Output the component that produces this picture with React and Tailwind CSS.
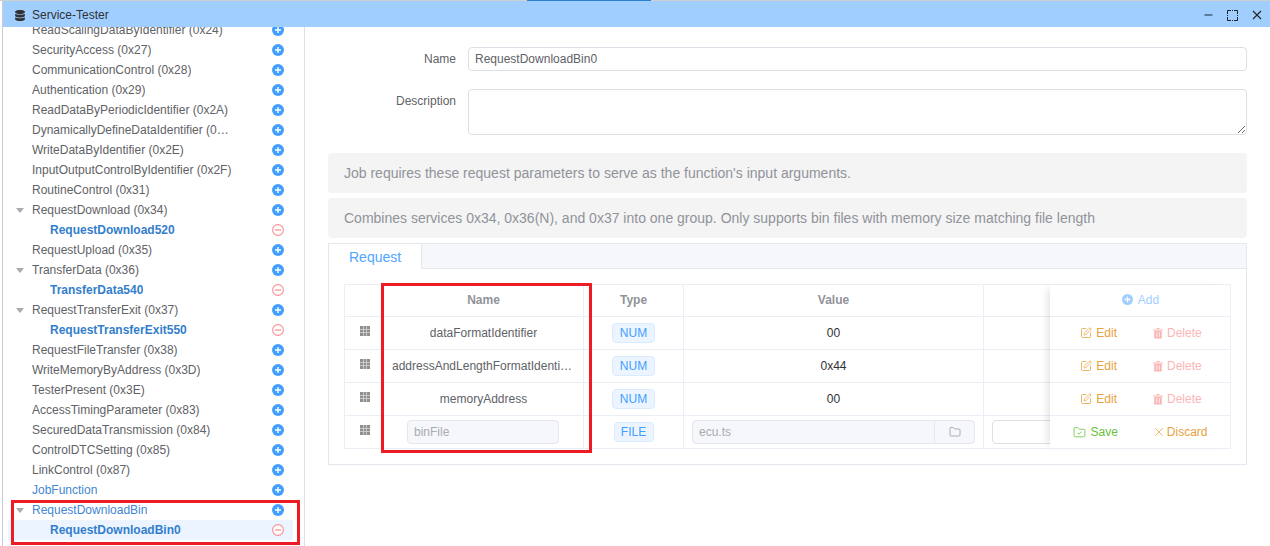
import { Folder, FolderCheck, SquarePen, X } from 'lucide-react';
import { FaDatabase } from 'react-icons/fa';

const services = [
	{ label: 'ReadScalingDataByIdentifier (0x24)' },
	{ label: 'SecurityAccess (0x27)' },
	{ label: 'CommunicationControl (0x28)' },
	{ label: 'Authentication (0x29)' },
	{ label: 'ReadDataByPeriodicIdentifier (0x2A)' },
	{ label: 'DynamicallyDefineDataIdentifier (0x2C)' },
	{ label: 'WriteDataByIdentifier (0x2E)' },
	{ label: 'InputOutputControlByIdentifier (0x2F)' },
	{ label: 'RoutineControl (0x31)' },
	{ label: 'RequestDownload (0x34)', open: true },
	{ label: 'RequestDownload520', child: true },
	{ label: 'RequestUpload (0x35)' },
	{ label: 'TransferData (0x36)', open: true },
	{ label: 'TransferData540', child: true },
	{ label: 'RequestTransferExit (0x37)', open: true },
	{ label: 'RequestTransferExit550', child: true },
	{ label: 'RequestFileTransfer (0x38)' },
	{ label: 'WriteMemoryByAddress (0x3D)' },
	{ label: 'TesterPresent (0x3E)' },
	{ label: 'AccessTimingParameter (0x83)' },
	{ label: 'SecuredDataTransmission (0x84)' },
	{ label: 'ControlDTCSetting (0x85)' },
	{ label: 'LinkControl (0x87)' },
	{ label: 'JobFunction', job: true },
	{ label: 'RequestDownloadBin', open: true, job: true },
	{ label: 'RequestDownloadBin0', child: true, selected: true },
];

const params = [
	{ name: 'dataFormatIdentifier', value: '00' },
	{ name: 'addressAndLengthFormatIdentifier', value: '0x44' },
	{ name: 'memoryAddress', value: '00' },
];

const PlusCircle = ({ className = 'w-3 h-3 text-[#409eff]' }) => (
	<svg viewBox="0 0 12 12" className={className} aria-hidden="true">
		<circle cx="6" cy="6" r="6" fill="currentColor" />
		<path d="M6 3v6M3 6h6" stroke="#fff" strokeWidth="1.4" />
	</svg>
);

const MinusCircle = () => (
	<svg viewBox="0 0 12 12" className="w-3 h-3" aria-hidden="true">
		<circle cx="6" cy="6" r="5.4" fill="#fff" stroke="#f56c6c" strokeOpacity="0.75" strokeWidth="1.1" />
		<path d="M3 6h6" stroke="#f56c6c" strokeOpacity="0.8" strokeWidth="1.2" />
	</svg>
);

const DragGrid = () => (
	<svg viewBox="0 0 10 10" className="w-2.5 h-2.5 -mt-1" aria-hidden="true">
		<rect width="10" height="10" fill="#8f8f8f" />
		<path d="M3.5 0v10M6.5 0v10M0 3.5h10M0 6.5h10" stroke="#d6d6d6" strokeWidth="0.8" />
	</svg>
);

const TrashIcon = () => (
	<svg viewBox="0 0 12 12" className="w-3 h-3" aria-hidden="true">
		<path d="M1 2.5h10v1H1zM4.5 1h3v1h-3z" fill="#fab6b6" />
		<path d="M2.2 4h7.6v7.5H2.2z" fill="#fab6b6" />
		<path d="M4.7 5.3v4.6M7.3 5.3v4.6" stroke="#fff" strokeWidth="0.8" />
	</svg>
);

const TreeRow = ({ item }) => (
	<div
		className={`flex items-center h-5 pr-[9px] ${item.selected ? 'bg-[#ecf5ff]' : ''} ${item.child ? 'pl-[42px]' : 'pl-0'}`}
	>
		{!item.child && (
			<span className="w-6 shrink-0 flex justify-center">
				{item.open && (
					<span className="w-0 h-0 border-x-[4px] border-x-transparent border-t-[5px] border-t-[#a8abb2]" />
				)}
			</span>
		)}
		<span
			className={`truncate flex-none ${item.child ? 'font-bold text-[#337ecc]' : item.job ? 'text-[#3f86d3] max-w-[200px]' : 'text-[#606266] max-w-[200px]'}`}
		>
			{item.label}
		</span>
		<span className="ml-auto">{item.child ? <MinusCircle /> : <PlusCircle />}</span>
	</div>
);

const Tag = ({ children, wide }) => (
	<span
		className={`flex items-center justify-center h-5 rounded bg-[#ecf5ff] border border-[#d9ecff] text-[#409eff] ${wide ? 'w-[40px]' : 'w-[43px]'}`}
	>
		{children}
	</span>
);

const EditDelete = () => (
	<div className="flex items-center justify-center gap-[35px] h-full pl-[2px]">
		<span className="flex items-center gap-[4px] text-[#e6a23c]">
			<SquarePen className="w-3 h-3 text-[#e6a23c]" strokeWidth={1.6} />
			Edit
		</span>
		<span className="flex items-center gap-[3px] text-[#fab6b6]">
			<TrashIcon />
			Delete
		</span>
	</div>
);

const ParamTable = () => (
	<div className="flex border-t border-l border-r border-[#ebeef5] text-[#606266]">
		{/* Scrolling columns */}
		<div className="w-[705px] overflow-hidden">
			<div className="flex h-8 pb-[2px] border-b border-[#ebeef5] w-[860px] font-bold text-[#909399]">
				<div className="w-[39px]" />
				<div className="w-[200px] -mb-[2px] border-r border-[#ebeef5] flex items-center justify-center pb-[2px]">Name</div>
				<div className="w-[100px] -mb-[2px] border-r border-[#ebeef5] flex items-center justify-center pb-[2px]">Type</div>
				<div className="w-[300px] -mb-[2px] border-r border-[#ebeef5] flex items-center justify-center pb-[2px]">Value</div>
			</div>
			{params.map((p) => (
				<div key={p.name} className="flex h-[33px] border-b border-[#ebeef5] w-[860px]">
					<div className="w-[39px] flex items-center justify-center">
						<DragGrid />
					</div>
					<div className="w-[200px] border-r border-[#ebeef5] flex items-center justify-center px-2">
						<span className="truncate">{p.name}</span>
					</div>
					<div className="w-[100px] border-r border-[#ebeef5] flex items-center justify-center">
						<Tag>NUM</Tag>
					</div>
					<div className="w-[300px] border-r border-[#ebeef5] flex items-center justify-center text-[#303133]">
						{p.value}
					</div>
				</div>
			))}
			<div className="flex h-[33px] border-b border-[#ebeef5] w-[860px]">
				<div className="w-[39px] flex items-center justify-center">
					<DragGrid />
				</div>
				<div className="w-[200px] border-r border-[#ebeef5] flex items-center pl-[23px]">
					<input
						readOnly
						value="binFile"
						className="w-[152px] h-6 px-[6px] rounded bg-[#f5f7fa] border border-[#e4e7ed] text-[#a8abb2] outline-none"
					/>
				</div>
				<div className="w-[100px] border-r border-[#ebeef5] flex items-center justify-center">
					<Tag wide>FILE</Tag>
				</div>
				<div className="w-[300px] border-r border-[#ebeef5] flex items-center pl-2">
					<div className="flex w-[283px] h-6 rounded bg-[#f5f7fa] border border-[#e4e7ed]">
						<input
							readOnly
							value="ecu.ts"
							className="flex-1 min-w-0 px-[6px] bg-transparent text-[#a8abb2] outline-none"
						/>
						<span className="w-10 border-l border-[#e4e7ed] flex items-center justify-center text-[#909399]">
							<Folder className="w-3 h-3" strokeWidth={1.5} />
						</span>
					</div>
				</div>
				<div className="flex items-center pl-2">
					<div className="w-[140px] h-6 rounded border border-[#dcdfe6] bg-white" />
				</div>
			</div>
		</div>

		{/* Fixed action column */}
		<div className="w-[180px] bg-white shadow-[-6px_0_8px_-4px_rgba(0,0,0,0.12)]">
			<div className="h-8 pb-[2px] border-b border-[#ebeef5] flex items-center justify-center gap-[5px] pl-px text-[#a0cfff]">
				<PlusCircle className="w-[11px] h-[11px] text-[#a0cfff]" />
				Add
			</div>
			{params.map((p) => (
				<div key={p.name} className="h-[33px] border-b border-[#ebeef5]">
					<EditDelete />
				</div>
			))}
			<div className="h-[33px] border-b border-[#ebeef5] flex items-center justify-center gap-[34px] pl-[1px]">
				<span className="flex items-center gap-[4px] text-[#67c23a]">
					<FolderCheck className="w-[13px] h-[13px]" strokeWidth={1.5} />
					Save
				</span>
				<span className="flex items-center gap-[1px] text-[#e6a23c]">
					<X className="w-[14px] h-[14px]" strokeWidth={1.3} />
					Discard
				</span>
			</div>
		</div>
	</div>
);

const App = () => (
	<div className="relative w-[1270px] h-[546px] overflow-hidden bg-white text-xs font-['Liberation_Sans',Arial,sans-serif]">
		{/* Sliver of the page behind the window */}
		<div className="flex h-px bg-[#cfcfcf]">
			<div className="w-[527px]" />
			<div className="w-[124px] bg-[#2f7fd0]" />
		</div>

		<div className="ml-[2px] h-[545px] border-l border-[#c8ccd4] flex flex-col">
			<header className="relative z-10 h-[26px] shrink-0 bg-[#a0cfff] flex items-center pt-[2px] pl-3 pr-2 text-[#303133]">
				<FaDatabase className="w-[10px] h-[11px] mr-[7px]" />
				<span>Service-Tester</span>
				<div className="ml-auto flex items-center gap-[14px]">
					<svg viewBox="0 0 10 10" className="w-2.5 h-2.5" aria-hidden="true">
						<path d="M1.5 5h8" stroke="#3d5a73" strokeWidth="1.4" />
					</svg>
					<svg viewBox="0 0 11 11" className="w-[11px] h-[11px]" aria-hidden="true">
						<path d="M.5 3V.5H3M8 .5h2.5V3M10.5 8v2.5H8M3 10.5H.5V8" fill="none" stroke="#222" />
						<path d="M.5 3v5M3 .5h5M10.5 3v5M3 10.5h5" fill="none" stroke="#222" strokeDasharray="1 1" />
					</svg>
					<svg viewBox="0 0 10 10" className="w-2.5 h-2.5" aria-hidden="true">
						<path d="M1 1l8 8M9 1l-8 8" stroke="#222" strokeWidth="1.1" />
					</svg>
				</div>
			</header>

			<div className="flex flex-1 min-h-0">
				<aside className="w-[302px] shrink-0 border-r border-[#dcdfe6] overflow-hidden pl-[5px]">
					<div className="-mt-[7px] w-[285px]">
						{services.map((item) => (
							<TreeRow key={item.label} item={item} />
						))}
					</div>
				</aside>

				<main className="flex-1 min-w-0 pt-5 pl-[23px] pr-[23px]">
					<div className="flex items-center h-6">
						<label className="w-[128px] text-right text-[#606266]">Name</label>
						<input
							readOnly
							value="RequestDownloadBin0"
							className="ml-3 flex-1 h-6 px-[6px] rounded border border-[#dcdfe6] text-[#606266] outline-none"
						/>
					</div>
					<div className="flex mt-[18px]">
						<label className="w-[128px] text-right text-[#606266] leading-6">Description</label>
						<textarea readOnly className="ml-3 flex-1 h-[46px] block rounded border border-[#dcdfe6] outline-none" />
					</div>

					<div className="mt-[18px] h-10 flex items-center px-4 rounded bg-[#f4f4f5] text-sm text-[#909399]">
						Job requires these request parameters to serve as the function's input arguments.
					</div>
					<div className="mt-[5px] h-10 flex items-center px-4 rounded bg-[#f4f4f5] text-sm text-[#909399]">
						Combines services 0x34, 0x36(N), and 0x37 into one group. Only supports bin files with memory size matching file length
					</div>

					<section className="mt-[5px] border border-[#e4e7ed]">
						<div className="h-[25px] bg-[#f5f7fa] border-b border-[#e4e7ed] flex">
							<div className="w-[93px] h-[25px] bg-white border-r border-[#e4e7ed] pl-5 flex items-center text-sm text-[#4fa6ff]">
								Request
							</div>
						</div>
						<div className="p-[15px]">
							<ParamTable />
						</div>
					</section>
				</main>
			</div>
		</div>

		{/* Red annotation boxes drawn over the screenshot */}
		<div className="absolute left-[11px] top-[500px] w-[289px] h-[45px] border-[3px] border-[#ed1c24] pointer-events-none z-20" />
		<div className="absolute left-[381px] top-[283px] w-[211px] h-[170px] border-[3px] border-[#ed1c24] pointer-events-none z-20" />
	</div>
);

export default App;
